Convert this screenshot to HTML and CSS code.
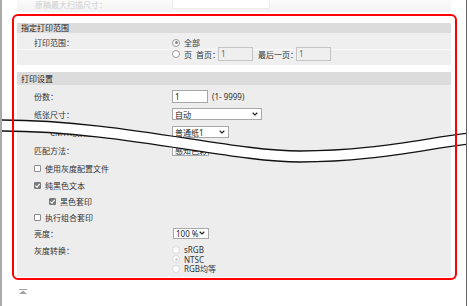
FILE: index.html
```html
<!DOCTYPE html>
<html lang="zh-CN">
<head>
  <meta charset="UTF-8" />
  <title>打印设置</title>
  <link rel="stylesheet" href="styles.css">
</head>
<body>
  <div class="window">
    <div class="prev-row">
      <span class="prev-label">原稿最大扫描尺寸：</span>
      <span class="prev-input"></span>
    </div>

    <div class="mark">
      <div class="section">
        <div class="section-head head-sm">指定打印范围</div>
        <div class="section-body range">
          <div class="label">打印范围：</div>
          <div class="options">
            <div class="opt"><span class="radio on"></span>全部</div>
            <div class="opt pages">
              <span class="radio"></span>页
              <span class="sub">首页：</span><span class="box pg">1</span>
              <span class="sub last">最后一页：</span><span class="box pg">1</span>
            </div>
          </div>
        </div>
      </div>

      <div class="section">
        <div class="section-head">打印设置</div>
        <div class="section-body settings">
          <div class="row">
            <div class="label">份数：</div>
            <div class="field"><span class="box num">1</span><span class="hint">(1- 9999)</span></div>
          </div>
          <div class="row">
            <div class="label">纸张尺寸：</div>
            <div class="field"><div class="select w-auto"><span>自动</span><svg viewBox="0 0 7 4"><polyline points="0.8,0.6 3.5,3.2 6.2,0.6"/></svg></div></div>
          </div>
          <div class="row">
            <div class="label indent">CMYK模拟配置文件：</div>
            <div class="field"><div class="select w-paper"><span>普通纸1</span><svg viewBox="0 0 7 4"><polyline points="0.8,0.6 3.5,3.2 6.2,0.6"/></svg></div></div>
          </div>
          <div class="row">
            <div class="label">匹配方法：</div>
            <div class="field"><div class="select w-match small"><span>感知色彩</span></div></div>
          </div>

          <div class="check-row tall"><span class="cb"></span>使用灰度配置文件</div>
          <div class="check-row"><span class="cb on"><svg viewBox="0 0 7 7"><polyline points="1.4,3.6 3,5.1 5.7,1.8"/></svg></span>纯黑色文本</div>
          <div class="check-row sub-check"><span class="cb on"><svg viewBox="0 0 7 7"><polyline points="1.4,3.6 3,5.1 5.7,1.8"/></svg></span>黑色套印</div>
          <div class="check-row"><span class="cb"></span>执行组合套印</div>

          <div class="row short">
            <div class="label">亮度：</div>
            <div class="field"><div class="select w-pct small"><span>100 %</span><svg viewBox="0 0 7 4"><polyline points="0.8,0.6 3.5,3.2 6.2,0.6"/></svg></div></div>
          </div>
          <div class="row radios">
            <div class="label">灰度转换：</div>
            <div class="options">
              <div class="opt line"><span class="radio off"></span>sRGB</div>
              <div class="opt line"><span class="radio off on"></span>NTSC</div>
              <div class="opt line"><span class="radio off"></span>RGB均等</div>
            </div>
          </div>
        </div>
      </div>
    </div>

    <svg class="to-top" viewBox="0 0 8 5">
      <rect x="0" y="0" width="8" height="1" />
      <polygon points="4,1.5 8,5 0,5" />
    </svg>

    <svg class="break" viewBox="0 0 469 306">
      <path class="band" d="M0,120 C120,120 230,151 300,151 C370,151 420,139 469,133 L469,144 C420,150 370,162 300,162 C230,162 120,131 0,131 Z" />
      <path class="cut" d="M0,120 C120,120 230,151 300,151 C370,151 420,139 469,133" />
      <path class="cut" d="M0,131 C120,131 230,162 300,162 C370,162 420,150 469,144" />
    </svg>
  </div>
</body>
</html>
```

FILE: styles.css
```css
body {
  margin: 0;
  background: #fff;
  font-family: "Noto Sans", "Noto Sans CJK SC", sans-serif;
  font-size: 8px;
  color: #333;
}
.window {
  position: relative;
  width: 467px;
  height: 306px;
  box-sizing: border-box;
  border-left: 2px solid #aaa;
  border-right: 1px solid #666;
  padding: 0 15px;
  overflow: hidden;
}
.prev-row {
  height: 12px;
  display: grid;
  grid-template-columns: 137px 98px;
  padding-left: 18px;
  background: linear-gradient(#fbfbfb, #f2f2f2);
}
.prev-label {
  color: #cfcfcf;
  line-height: 9px;
}
.prev-input {
  height: 9px;
  background: #fff;
  border: 1px solid #ececec;
  border-top: none;
  box-sizing: border-box;
}

/* red annotation frame */
.mark {
  position: relative;
  margin: 2px -6px 0 -5px;
  padding: 9px 6px 3px 5px;
}
.mark::after {
  content: "";
  position: absolute;
  inset: 0;
  border: 2px solid #f00;
  border-radius: 6px;
  z-index: 2;
  pointer-events: none;
}
.section + .section {
  margin-top: 7px;
}
.section-head {
  height: 13px;
  line-height: 13px;
  padding-left: 4px;
  background: #dcdcdc;
  color: #222;
}
.section-head.head-sm {
  height: 10px;
  line-height: 10px;
}
.section-body {
  background: #ededed;
  padding-left: 17px;
}
.range {
  display: grid;
  grid-template-columns: 138px 1fr;
  height: 32px;
  box-sizing: border-box;
  padding-top: 5px;
  background: linear-gradient(#efefef 16px, #f8f8f8 16px, #f8f8f8 17px, #efefef 17px);
}
.range .label {
  line-height: 10px;
}
.opt {
  display: flex;
  align-items: center;
  white-space: nowrap;
}
.range .opt {
  height: 9px;
}
.range .opt.pages {
  height: 14px;
}
.sub {
  margin-left: 4px;
}
.sub.last {
  margin-left: 5px;
}
.radio {
  position: relative;
  width: 8px;
  height: 8px;
  box-sizing: border-box;
  border: 1px solid #9a9a9a;
  border-radius: 50%;
  background: #fff;
  margin-right: 4px;
  flex-shrink: 0;
}
.radio.on::after {
  content: "";
  position: absolute;
  inset: 1.5px;
  border-radius: 50%;
  background: #858585;
}
.radio.off {
  border-color: #dadada;
}
.radio.off.on::after {
  background: #d2d2d2;
}
.box {
  display: inline-block;
  box-sizing: border-box;
  background: #fff;
  border: 1px solid #a6a6a6;
  padding-left: 2px;
  color: #222;
}
.box.pg {
  width: 35px;
  height: 14px;
  line-height: 12px;
  background: #efefef;
  border-color: #c4c4c4;
  color: #666;
  margin-left: -2px;
}
.box.num {
  width: 36px;
  height: 13px;
  line-height: 11px;
}
.hint {
  margin-left: 4px;
}

.settings {
  height: 192px;
  box-sizing: border-box;
  padding-top: 2px;
}
.row {
  display: grid;
  grid-template-columns: 138px 1fr;
  align-items: center;
  height: 18px;
}
.row.short {
  height: 16px;
}
.label.indent {
  padding-left: 16px;
  white-space: nowrap;
}
.field {
  display: flex;
  align-items: center;
}
.select {
  display: flex;
  align-items: center;
  justify-content: space-between;
  box-sizing: border-box;
  height: 12px;
  border: 1px solid #a8a8a8;
  background: #fff;
  padding: 0 3px 0 2px;
  color: #222;
  overflow: hidden;
  white-space: nowrap;
}
.select.small {
  height: 11px;
}
.select svg {
  width: 6px;
  height: 4px;
  flex-shrink: 0;
  fill: none;
  stroke: #222;
  stroke-width: 1.4;
}
.w-auto { width: 90px; }
.w-paper { width: 57px; }
.w-match { width: 37px; }
.w-pct { width: 36px; margin-left: 1px; }

.check-row {
  display: flex;
  align-items: center;
  height: 16px;
}
.check-row.tall {
  height: 18px;
}
.check-row.sub-check {
  padding-left: 15px;
}
.cb {
  display: flex;
  width: 7px;
  height: 7px;
  box-sizing: border-box;
  border: 1px solid #8c8c8c;
  border-radius: 1px;
  background: #fff;
  margin-right: 4px;
}
.cb.on {
  background: #7a7a7a;
  border-color: #7a7a7a;
}
.cb svg {
  width: 7px;
  height: 7px;
  margin: -1px;
  fill: none;
  stroke: #fff;
  stroke-width: 1.2;
}
.row.radios {
  align-items: start;
  height: auto;
  padding-top: 4px;
}
.row.radios .label {
  margin-top: 1px;
  line-height: 10px;
}
.row.radios .opt {
  height: 9.5px;
}

.to-top {
  display: block;
  width: 8px;
  height: 5px;
  margin: 9px 0 0 2px;
  fill: #a3a3a3;
}
.break {
  position: absolute;
  top: 0;
  left: -2px;
  width: 469px;
  height: 306px;
  z-index: 1;
  pointer-events: none;
}
.break .band {
  fill: #fff;
}
.break .cut {
  fill: none;
  stroke: #111;
  stroke-width: 1.3;
}
```
